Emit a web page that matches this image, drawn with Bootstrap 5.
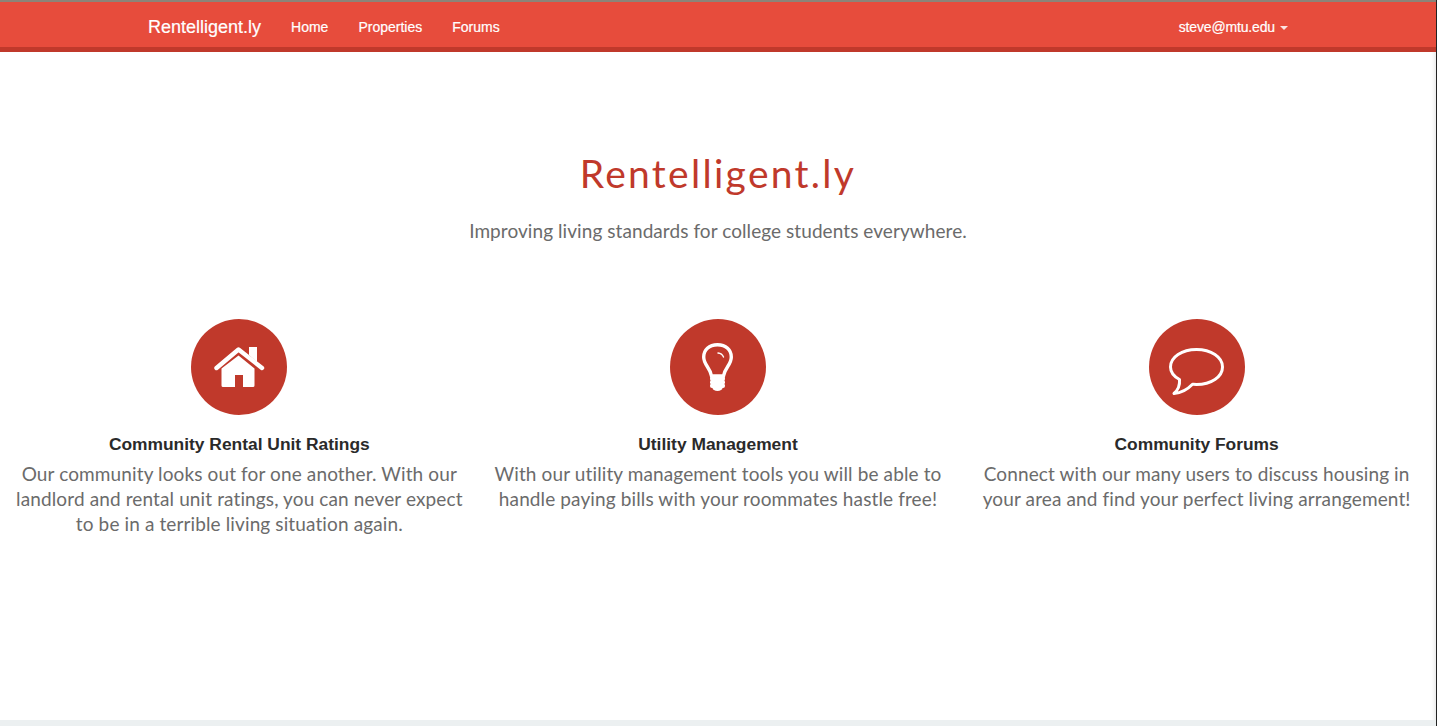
<!DOCTYPE html>
<html lang="en">
<head>
<meta charset="utf-8">
<title>Rentelligent.ly</title>
<link rel="stylesheet" href="https://cdn.jsdelivr.net/npm/bootstrap@5.3.0/dist/css/bootstrap.min.css">
<style>
html,body{height:100%;overflow:hidden}
body{font-family:"Lato","Liberation Sans",sans-serif;color:#6b6b6b;background:#fff;display:flex;flex-direction:column;height:726px;border-right:1px solid #222;box-shadow:inset -6px 0 5px -5px rgba(0,0,0,.12)}
.topbar{background:#e74c3c;border-top:2px solid #8c8478;border-bottom:5px solid #c0392b;height:52px;padding:0;font-family:"Liberation Sans",sans-serif;flex:none}
.topbar .shell{width:1170px;max-width:1170px;padding:4px 15px 0;margin:0 auto;display:flex;align-items:center;height:45px}
.topbar .navbar-brand{color:#fff;font-size:18px;padding:0;margin:0 30px 0 0;line-height:20px;-webkit-text-stroke:.2px #fff}
.topbar .navbar-nav{gap:30px;flex-direction:row}
.topbar .navbar-nav .nav-link{color:#fff;font-size:14px;padding:0;line-height:20px;-webkit-text-stroke:.2px #fff}
.topbar .navbar-nav .who{letter-spacing:-.15px}
.topbar .who::after{margin-left:5px;border-top:4px solid rgba(255,255,255,.85);border-left:4px solid transparent;border-right:4px solid transparent;border-bottom:0;vertical-align:2px}
.page-main{flex:1 1 auto;display:flex;flex-direction:column}
.hero-title{font-family:"Lato",sans-serif;font-size:39px;font-weight:400;letter-spacing:2.300px;color:#c0392b;text-align:center;margin:98px 0 0;line-height:46px}
.hero-sub{font-size:19px;letter-spacing:.07px;line-height:26px;text-align:center;margin:22px 0 0;color:#6b6b6b}
.features{margin-top:75px}
.feat-col{padding:0 14px}
.disc{width:96px;height:96px;border-radius:50%;background:#c0392b;margin:0 auto}
.disc svg{display:block}
.feat-title{font-family:"Liberation Sans",sans-serif;font-weight:700;font-size:17.400px;color:#2a2a2a;line-height:20px;margin:19px 0 7px}
.feat-text{font-size:19px;letter-spacing:.12px;line-height:25px;margin:0;color:#6b6b6b}
.foot-strip{height:6px;background:#ecf0f1;flex:none}
</style>
</head>
<body>
<nav class="navbar navbar-expand topbar">
  <div class="shell">
    <a class="navbar-brand" href="#">Rentelligent.ly</a>
    <ul class="navbar-nav">
      <li class="nav-item"><a class="nav-link" href="#">Home</a></li>
      <li class="nav-item"><a class="nav-link" href="#">Properties</a></li>
      <li class="nav-item"><a class="nav-link" href="#">Forums</a></li>
    </ul>
    <ul class="navbar-nav ms-auto">
      <li class="nav-item dropdown"><a class="nav-link dropdown-toggle who" href="#">steve@mtu.edu</a></li>
    </ul>
  </div>
</nav>
<main class="page-main">
  <h1 class="hero-title">Rentelligent.ly</h1>
  <p class="hero-sub">Improving living standards for college students everywhere.</p>
  <div class="row g-0 features text-center">
    <div class="col-4 feat-col">
      <div class="disc">
        <svg width="96" height="96" viewBox="0 0 96 96" fill="#fff"><path d="M58 28h8v15l-8-7z"/><path d="M25.500 49 47.500 30.500 71 49" fill="none" stroke="#fff" stroke-width="4.400" stroke-linecap="round" stroke-linejoin="round"/><path d="M47.500 36.500 63.500 49.500V66.500a1.500 1.500 0 0 1-1.500 1.500H52V56H44V68H32A1.500 1.500 0 0 1 30.500 66.500V49.500z"/></svg>
      </div>
      <h5 class="feat-title">Community Rental Unit Ratings</h5>
      <p class="feat-text">Our community looks out for one another. With our landlord and rental unit ratings, you can never expect to be in a terrible living situation again.</p>
    </div>
    <div class="col-4 feat-col">
      <div class="disc">
        <svg width="96" height="96" viewBox="0 0 96 96" fill="#fff"><path d="M47.500 25.700C39 25.700 33.700 31 33.700 38 33.700 46 40 48 41.500 57H53.500C55 48 61.300 46 61.300 38 61.300 31 56 25.700 47.500 25.700z" fill="none" stroke="#fff" stroke-width="3.400"/><path d="M48 34c2.500.2 4.500 1.500 5.500 4" fill="none" stroke="#fff" stroke-width="1.400" stroke-linecap="round"/><rect x="40" y="57.500" width="15" height="4.500" rx="2"/><rect x="40" y="61" width="15" height="4.500" rx="2"/><rect x="40" y="64.500" width="15" height="4.500" rx="2"/><ellipse cx="47.500" cy="69" rx="5" ry="3"/></svg>
      </div>
      <h5 class="feat-title">Utility Management</h5>
      <p class="feat-text">With our utility management tools you will be able to handle paying bills with your roommates hastle free!</p>
    </div>
    <div class="col-4 feat-col">
      <div class="disc">
        <svg width="96" height="96" viewBox="0 0 96 96" fill="none"><path d="M43.500 65.300C45 65.400 46 65.500 47.500 65.500 62 65.500 73.500 58 73.500 48 73.500 38 62 30.500 47.500 30.500 33 30.500 21.500 38 21.500 48 21.500 53 25 57.500 30.500 60.500 31 66 29 71 25 74.500 32 74 39 70 43.500 65.300z" stroke="#fff" stroke-width="3" stroke-linejoin="round"/></svg>
      </div>
      <h5 class="feat-title">Community Forums</h5>
      <p class="feat-text">Connect with our many users to discuss housing in your area and find your perfect living arrangement!</p>
    </div>
  </div>
</main>
<div class="foot-strip"></div>
</body>
</html>
